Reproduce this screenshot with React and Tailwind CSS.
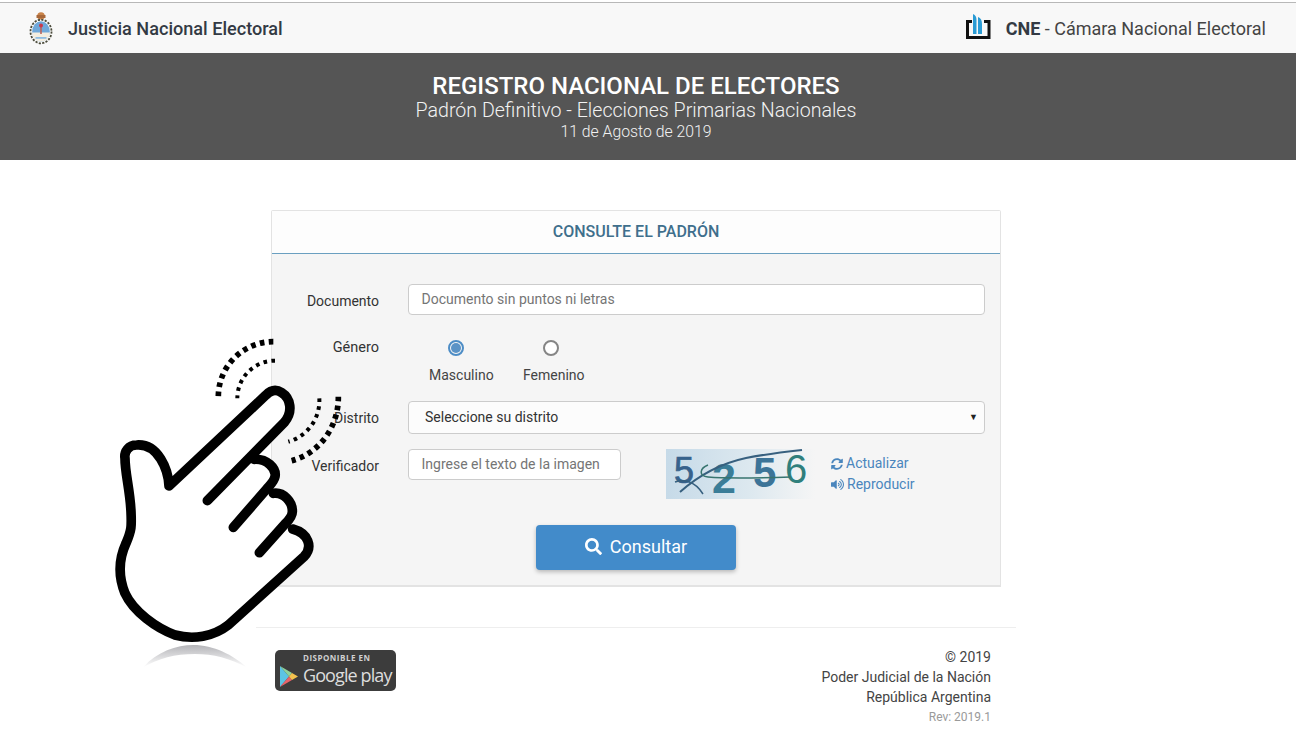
import React from "react";
import { FaSearch, FaSyncAlt, FaVolumeUp } from "react-icons/fa";

function Emblem() {
  return (
    <svg width="26" height="34" viewBox="0 0 26 34">
      <circle cx="13" cy="5" r="3.800" fill="#c9834a" />
      <rect x="8.500" y="4" width="9" height="3" fill="#a8683a" />
      <ellipse cx="13" cy="20.500" rx="10.500" ry="11.800" fill="#ffffff" stroke="#4a4a3a" strokeWidth="1.800" strokeDasharray="2.200 1.300" />
      <ellipse cx="13" cy="20.500" rx="8.800" ry="10.200" fill="#6fa8da" />
      <path d="M4.300 21.500h17.400c-.3 5.500-4 9.200-8.700 9.200s-8.400-3.700-8.700-9.200z" fill="#f4eee0" />
      <path d="M7.500 26h11v1.800h-11z" fill="#8fbde2" />
      <rect x="12.200" y="13" width="1.600" height="10" fill="#b9655c" />
      <circle cx="13" cy="14.500" r="2" fill="#c9384a" />
    </svg>
  );
}

function CneLogo() {
  return (
    <svg width="26" height="28" viewBox="0 0 26 28" className="mb-[3px]">
      <path d="M6 8.500H1.500V24.500H23V8.500H18" fill="none" stroke="#111" strokeWidth="3" />
      <path d="M7 1c2.500 1 3.500 3 3.500 6v14H7z" fill="#2a9bd4" />
      <path d="M12 4c2.800 1 4 3.500 4 7v10h-4z" fill="#2a9bd4" />
    </svg>
  );
}

function Captcha() {
  return (
    <svg width="149" height="50" viewBox="0 0 149 50" className="block rounded-[2px] overflow-visible">
      <defs>
        <linearGradient id="cg" x1="0" x2="1" y1="0" y2="0">
          <stop offset="0" stopColor="#c6dae8" />
          <stop offset="0.55" stopColor="#dce8ef" />
          <stop offset="1" stopColor="#f5f5f5" />
        </linearGradient>
      </defs>
      <rect width="149" height="50" fill="url(#cg)" />
      <text x="8" y="34" fontFamily="'Liberation Sans', sans-serif" fontSize="36" stroke="#37628c" strokeWidth="0.700" fill="#37628c">5</text>
      <text x="46" y="44" fontFamily="'Liberation Sans', sans-serif" fontWeight="700" fontSize="43" fill="#3a7d98">2</text>
      <text x="87" y="38" fontFamily="'Liberation Sans', sans-serif" fontWeight="700" fontSize="42" fill="#3c7498">5</text>
      <text x="119" y="34" fontFamily="'Liberation Sans', sans-serif" fontSize="40" fill="#2f7f7c">6</text>
      <path d="M14 43C32 27 52 15 80 9C100 5 118 3 136 1" fill="none" stroke="#37607f" strokeWidth="2" />
      <path d="M9 33c9-3 20-1 28 12" fill="none" stroke="#37607f" strokeWidth="1.500" />
      <path d="M42 16c-8 3-10 11 0 12 12 1 50 1 83 0" fill="none" stroke="#37746f" strokeWidth="1.500" />
    </svg>
  );
}

function GooglePlay() {
  return (
    <div className="w-[121px] h-[41px] rounded-[5px] bg-[#3c3c3c] relative flex flex-col items-start pl-[28px] overflow-hidden">
      <span className="text-[8px] leading-[10px] font-bold text-[#d0d0d0] tracking-[0.5px] mt-[3px] font-['Open_Sans',sans-serif] whitespace-nowrap">DISPONIBLE EN</span>
      <span className="text-[18px] leading-[24px] text-[#dddddd] tracking-[-0.9px] font-['Open_Sans',sans-serif] whitespace-nowrap">Google play</span>
      <svg width="18" height="21" viewBox="0 0 18 21" className="absolute left-[5px] top-[16px]">
        <path d="M0 0l9 10.500L0 21z" fill="#5cc4e4" />
        <path d="M0 0l12 7-3 3.500z" fill="#8fd29a" />
        <path d="M0 21l12-7-3-3.500z" fill="#e8636a" />
        <path d="M12 7l6 3.500-6 3.500-3-3.500z" fill="#f2c14e" />
      </svg>
    </div>
  );
}

function Hand() {
  return (
    <svg
      width="260"
      height="350"
      viewBox="0 0 780 1050"
      className="absolute left-[100px] top-[330px] pointer-events-none"
    >
      <defs>
        <linearGradient id="refl" x1="0" x2="0" y1="0" y2="1">
          <stop offset="0" stopColor="#b4b4b8" />
          <stop offset="1" stopColor="#ffffff" />
        </linearGradient>
      </defs>
      <path d="M130 1012C170 965 230 945 280 945C340 945 400 975 440 1012C390 985 340 972 285 972C225 972 175 985 130 1012z" fill="url(#refl)" />
      <path
        d="M207 468L497 196C530 166 574 205 572 238C571 255 563 266 553 277L470 380C500 385 530 415 525 440C522 455 520 470 510 490C550 485 578 515 577 545C577 560 570 575 560 595C600 605 640 650 612 680L385 885C340 920 280 930 225 915C170 895 100 845 75 790C55 740 55 690 78 640C95 600 95 590 93 545C90 480 75 430 75 385C72 365 85 345 110 345C175 340 205 420 207 468z"
        fill="#ffffff"
      />
      <g fill="none" stroke="#000" strokeWidth="29" strokeLinecap="round" strokeLinejoin="round">
        <path d="M322 512L553 277C580 245 572 205 545 188C525 175 510 183 497 196L207 468C205 420 175 340 110 345C85 345 72 365 75 385C75 430 90 480 93 545C95 590 95 600 78 640C55 690 55 740 75 790C100 845 170 895 225 915C280 930 340 920 385 885L612 680C640 650 625 610 578 597" />
        <path d="M462 388C500 385 530 415 525 440C522 455 510 465 500 477L400 592" />
        <path d="M520 490C550 485 578 515 577 545C577 560 565 572 555 582L478 668" />
      </g>
      <g fill="none" stroke="#000">
        <path d="M520 35A165 165 0 0 0 355 202" strokeWidth="17" strokeDasharray="14 13" />
        <path d="M525 92A113 113 0 0 0 412 205" strokeWidth="12" strokeDasharray="11 13" />
        <path d="M658 205A128 128 0 0 1 565 335" strokeWidth="12" strokeDasharray="11 13" />
        <path d="M715 200A185 195 0 0 1 575 392" strokeWidth="17" strokeDasharray="14 13" />
      </g>
    </svg>
  );
}

const labelCls = "w-[107px] text-right text-[14px] leading-[20px] text-[#333333] shrink-0";
const fieldCls = "border border-[#cccccc] rounded-[4px] text-[14px] flex items-center";

export default function App() {
  return (
    <div className="relative w-full h-[744px] bg-white overflow-hidden font-['Roboto',sans-serif]">
      <div className="h-[2px] bg-white" />
      <header className="h-[51px] bg-[#f8f8f8] border-t border-[#b8b8b8] flex items-center justify-between pl-[28px] pr-[30px]">
        <div className="flex items-center gap-[14px]">
          <Emblem />
          <span className="text-[18.100px] leading-[24px] pt-[1px] font-medium text-[#333a44]">Justicia Nacional Electoral</span>
        </div>
        <div className="flex items-center gap-[14px]">
          <CneLogo />
          <span className="text-[18px] text-[#444444]"><b className="font-bold text-[#333a44]">CNE</b> - Cámara Nacional Electoral</span>
        </div>
      </header>
      <section className="h-[107px] bg-[#555555] text-white flex flex-col items-center pr-[24px] pt-[19px]">
        <h1 className="text-[24px] leading-[28px] font-medium">REGISTRO NACIONAL DE ELECTORES</h1>
        <p className="text-[19.600px] leading-[22px] font-light text-[#f2f2f2]">Padrón Definitivo - Elecciones Primarias Nacionales</p>
        <p className="text-[15.800px] leading-[20px] font-light text-[#f2f2f2]">11 de Agosto de 2019</p>
      </section>

      <main className="ml-[256px] w-[760px]">
        <div className="mt-[50px] ml-[15px] w-[730px] h-[377px] bg-[#f5f5f5] border border-[#e3e3e3] border-b-2 rounded-t-[2px]">
          <div className="h-[43px] bg-[#fdfdfd] border-b border-[#6a9fc0] flex items-center justify-center text-[16px] font-medium text-[#3f6f8c]">
            CONSULTE EL PADRÓN
          </div>
          <div className="pr-[15px] pt-[30px]">
            <div className="flex items-center h-[31px]">
              <label className={labelCls + " pt-[3px]"}>Documento</label>
              <div className={fieldCls + " ml-[29px] flex-1 h-[31px] pl-[12.500px] bg-white text-[#757575]"}>Documento sin puntos ni letras</div>
            </div>
            <div className="flex mt-[21px] h-[65px]">
              <label className="w-[107px] text-right text-[14.500px] leading-[20px] text-[#333333] shrink-0 mt-[2px]">Género</label>
              <div className="flex ml-[29px] relative">
                <div className="w-[115px] pl-[21px] flex flex-col items-start">
                  <span className="ml-[19px] w-[16px] h-[16px] rounded-full border-2 border-[#4d8dc6] flex items-center justify-center mt-[4px]">
                    <span className="w-[10px] h-[10px] rounded-full bg-[#5b93c6]" />
                  </span>
                  <span className="text-[14px] leading-[20px] text-[#444444] mt-[9px]">Masculino</span>
                </div>
                <div className="flex flex-col items-start">
                  <span className="ml-[20px] w-[16px] h-[16px] rounded-full border-2 border-[#858585] bg-white mt-[4px]" />
                  <span className="text-[14px] leading-[20px] text-[#444444] mt-[9px]">Femenino</span>
                </div>
              </div>
            </div>
            <div className="flex items-center h-[33px]">
              <label className={labelCls}>Distrito</label>
              <div className={fieldCls + " ml-[29px] flex-1 h-[33px] pl-[16px] pr-[6px] justify-between bg-[#fcfcfc] text-[#333333]"}>
                <span>Seleccione su distrito</span>
                <span className="text-[9px] text-[#222222]">▼</span>
              </div>
            </div>
            <div className="flex mt-[15px] h-[50px]">
              <label className={labelCls + " pt-[7px]"}>Verificador</label>
              <div className={fieldCls + " ml-[29px] w-[213px] h-[31px] pl-[12.500px] bg-white text-[#757575]"}>Ingrese el texto de la imagen</div>
              <div className="ml-[45px]"><Captcha /></div>
              <div className="ml-[16px] text-[14px] leading-[21px] text-[#4a86bd] mt-[4px]">
                <div className="flex items-center gap-[3px]"><FaSyncAlt className="text-[12px]" />Actualizar</div>
                <div className="flex items-center gap-[3px]"><FaVolumeUp className="text-[13px]" />Reproducir</div>
              </div>
            </div>
            <div className="flex justify-center mt-[26px] pl-[15px]">
              <button className="w-[200px] h-[45px] bg-[#428bca] rounded-[4px] text-white text-[18px] leading-[20px] pb-[2px] flex items-center justify-center gap-[8px] shadow-[0_2px_4px_rgba(0,0,0,0.25)]">
                <FaSearch className="text-[17px]" />Consultar
              </button>
            </div>
          </div>
        </div>

        <div className="mt-[40px] border-t border-[#eeeeee] flex justify-between pl-[19px] pr-[25px]">
          <div className="mt-[22px]"><GooglePlay /></div>
          <div className="text-right text-[14px] leading-[20px] text-[#444444] mt-[19px]">
            <div>© 2019</div>
            <div>Poder Judicial de la Nación</div>
            <div>República Argentina</div>
            <div className="text-[12px] text-[#9a9a9a]">Rev: 2019.1</div>
          </div>
        </div>
      </main>
      <Hand />
    </div>
  );
}
